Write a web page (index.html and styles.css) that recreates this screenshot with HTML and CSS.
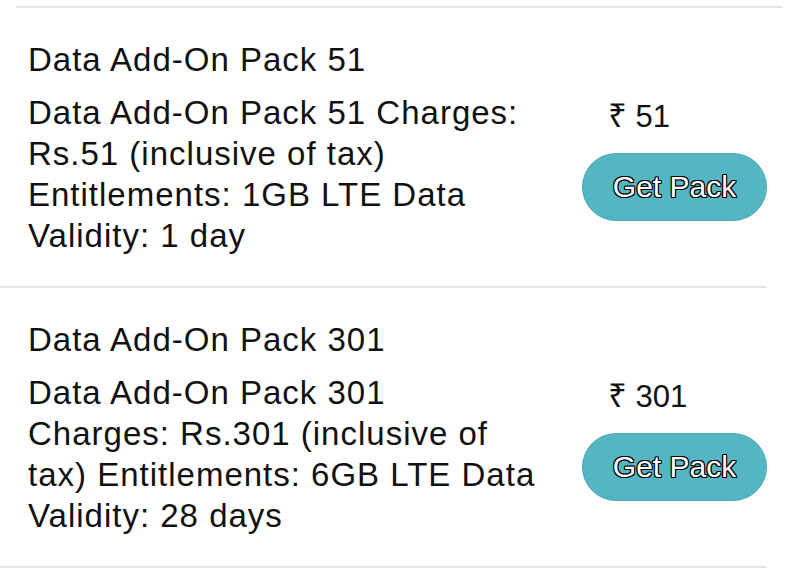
FILE: index.html
```html
<!DOCTYPE html>
<html lang="en">
<head>
    <meta charset="UTF-8">
    <meta name="viewport" content="width=device-width, initial-scale=1.0">
    <title>Data Add-On Packs</title>
    <link rel="stylesheet" href="styles.css">
</head>
<body>
    <div class="list-top"></div>
    <ul class="pack-list">
        <li class="pack">
            <h3 class="pack-title">Data Add-On Pack 51</h3>
            <div class="pack-row">
                <p class="pack-desc">Data Add-On Pack 51 Charges:<br>Rs.51 (inclusive of tax)<br>Entitlements: 1GB LTE Data<br>Validity: 1 day</p>
                <div class="pack-side">
                    <div class="pack-price"><span class="rupee">&#8377;</span> 51</div>
                    <button class="get-pack" type="button">Get Pack</button>
                </div>
            </div>
        </li>
        <li class="pack">
            <h3 class="pack-title">Data Add-On Pack 301</h3>
            <div class="pack-row">
                <p class="pack-desc">Data Add-On Pack 301<br>Charges: Rs.301 (inclusive of<br>tax) Entitlements: 6GB LTE Data<br>Validity: 28 days</p>
                <div class="pack-side">
                    <div class="pack-price"><span class="rupee">&#8377;</span> 301</div>
                    <button class="get-pack" type="button">Get Pack</button>
                </div>
            </div>
        </li>
    </ul>
</body>
</html>
```

FILE: styles.css
```css
body {
    font-family: "Liberation Sans", Arial, Helvetica, sans-serif;
    margin: 0;
    padding: 6px 0 0;
    color: #111;
    background: #fff;
}
.list-top {
    margin-left: 16px;
    width: 767px;
    height: 2px;
    background: #e6e6e6;
}
.pack-list {
    list-style: none;
    margin: 0;
    padding: 0;
    width: 767px;
}
.pack {
    padding: 31px 0 30px 28px;
    border-bottom: 2px solid #e6e6e6;
}
.pack-title {
    margin: 0 0 12px;
    font-size: 33px;
    font-weight: normal;
    line-height: 41px;
    letter-spacing: 1px;
}
.pack-row {
    display: flex;
    align-items: flex-start;
}
.pack-desc {
    flex: 1;
    margin: 0;
    font-size: 33px;
    line-height: 41px;
    letter-spacing: 1px;
    white-space: nowrap;
}
.pack-side {
    width: 185px;
    display: flex;
    flex-direction: column;
    align-items: flex-start;
}
.pack-price {
    padding: 6px 0 0 26px;
    height: 36px;
    font-size: 31px;
    line-height: 36px;
}
.rupee {
    font-size: 33px;
}
.get-pack {
    margin-top: 19px;
    width: 185px;
    height: 68px;
    border: 1px solid #4aaab6;
    border-radius: 34px;
    background-color: #54b6c2;
    font-family: "Liberation Sans", Arial, Helvetica, sans-serif;
    font-size: 30px;
    color: #fff;
    text-shadow: 1px 0 0 #000, -1px 0 0 #000, 0 1px 0 #000, 0 -1px 0 #000,
        1px 1px 0 #000, -1px -1px 0 #000, 1px -1px 0 #000, -1px 1px 0 #000;
    cursor: pointer;
}
```
